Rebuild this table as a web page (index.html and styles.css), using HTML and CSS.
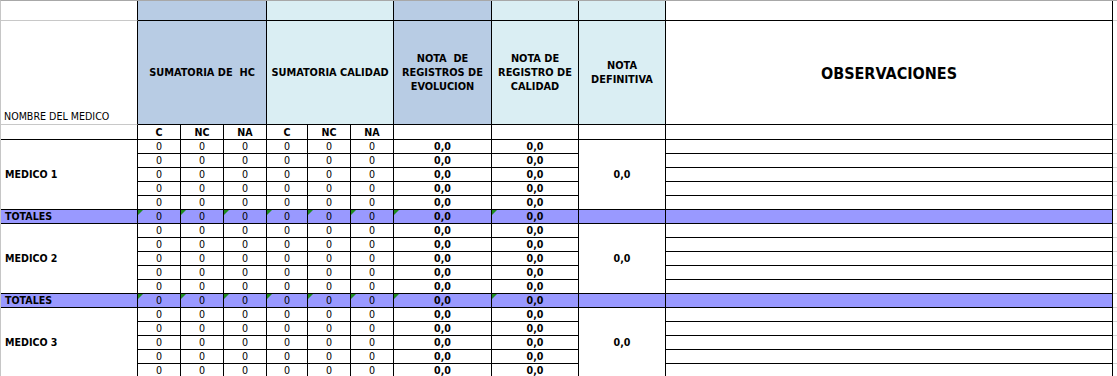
FILE: index.html
```html
<!DOCTYPE html>
<html lang="es">
<head>
<meta charset="utf-8">
<title>Evaluación de historias clínicas</title>
<link rel="stylesheet" href="styles.css">
</head>
<body>
<div class="sheet">
  <!-- header row 1 -->
  <div class="c gb"></div>
  <div class="c hb s3"></div>
  <div class="c hc s3"></div>
  <div class="c hb"></div>
  <div class="c hc"></div>
  <div class="c hc"></div>
  <div class="c"></div>
  <div class="g"></div>
  <!-- header row 2 -->
  <div class="c gb name">NOMBRE DEL MEDICO</div>
  <div class="c hb s3 hd">SUMATORIA DE&nbsp; HC</div>
  <div class="c hc s3 hd">SUMATORIA CALIDAD</div>
  <div class="c hb hd">NOTA&nbsp; DE<br>REGISTROS DE<br>EVOLUCION</div>
  <div class="c hc hd">NOTA DE<br>REGISTRO DE<br>CALIDAD</div>
  <div class="c hc hd">NOTA<br>DEFINITIVA</div>
  <div class="c obs">OBSERVACIONES</div>
  <div class="g"></div>
  <!-- header row 3 -->
  <div class="c"></div>
  <div class="c b">C</div><div class="c b">NC</div><div class="c b">NA</div>
  <div class="c b">C</div><div class="c b">NC</div><div class="c b">NA</div>
  <div class="c"></div><div class="c"></div><div class="c"></div><div class="c"></div>
  <div class="g"></div>

  <!-- MEDICO 1 -->
  <div class="c med">MEDICO 1</div>
  <div class="c n">0</div><div class="c n">0</div><div class="c n">0</div><div class="c n">0</div><div class="c n">0</div><div class="c n">0</div><div class="c b">0,0</div><div class="c b">0,0</div>
  <div class="c def">0,0</div>
  <div class="c"></div><div class="g"></div>
  <div class="c n">0</div><div class="c n">0</div><div class="c n">0</div><div class="c n">0</div><div class="c n">0</div><div class="c n">0</div><div class="c b">0,0</div><div class="c b">0,0</div><div class="c"></div><div class="g"></div>
  <div class="c n">0</div><div class="c n">0</div><div class="c n">0</div><div class="c n">0</div><div class="c n">0</div><div class="c n">0</div><div class="c b">0,0</div><div class="c b">0,0</div><div class="c"></div><div class="g"></div>
  <div class="c n">0</div><div class="c n">0</div><div class="c n">0</div><div class="c n">0</div><div class="c n">0</div><div class="c n">0</div><div class="c b">0,0</div><div class="c b">0,0</div><div class="c"></div><div class="g"></div>
  <div class="c n">0</div><div class="c n">0</div><div class="c n">0</div><div class="c n">0</div><div class="c n">0</div><div class="c n">0</div><div class="c b">0,0</div><div class="c b">0,0</div><div class="c"></div><div class="g"></div>
  <div class="c tot lbl">TOTALES</div>
  <div class="c tot n tri">0</div><div class="c tot n tri">0</div><div class="c tot n tri">0</div><div class="c tot n tri">0</div><div class="c tot n tri">0</div><div class="c tot n tri">0</div><div class="c tot b tri">0,0</div><div class="c tot b tri">0,0</div><div class="c tot"></div><div class="c tot"></div><div class="g"></div>

  <!-- MEDICO 2 -->
  <div class="c med">MEDICO 2</div>
  <div class="c n">0</div><div class="c n">0</div><div class="c n">0</div><div class="c n">0</div><div class="c n">0</div><div class="c n">0</div><div class="c b">0,0</div><div class="c b">0,0</div>
  <div class="c def">0,0</div>
  <div class="c"></div><div class="g"></div>
  <div class="c n">0</div><div class="c n">0</div><div class="c n">0</div><div class="c n">0</div><div class="c n">0</div><div class="c n">0</div><div class="c b">0,0</div><div class="c b">0,0</div><div class="c"></div><div class="g"></div>
  <div class="c n">0</div><div class="c n">0</div><div class="c n">0</div><div class="c n">0</div><div class="c n">0</div><div class="c n">0</div><div class="c b">0,0</div><div class="c b">0,0</div><div class="c"></div><div class="g"></div>
  <div class="c n">0</div><div class="c n">0</div><div class="c n">0</div><div class="c n">0</div><div class="c n">0</div><div class="c n">0</div><div class="c b">0,0</div><div class="c b">0,0</div><div class="c"></div><div class="g"></div>
  <div class="c n">0</div><div class="c n">0</div><div class="c n">0</div><div class="c n">0</div><div class="c n">0</div><div class="c n">0</div><div class="c b">0,0</div><div class="c b">0,0</div><div class="c"></div><div class="g"></div>
  <div class="c tot lbl">TOTALES</div>
  <div class="c tot n tri">0</div><div class="c tot n tri">0</div><div class="c tot n tri">0</div><div class="c tot n tri">0</div><div class="c tot n tri">0</div><div class="c tot n tri">0</div><div class="c tot b tri">0,0</div><div class="c tot b tri">0,0</div><div class="c tot"></div><div class="c tot"></div><div class="g"></div>

  <!-- MEDICO 3 -->
  <div class="c med">MEDICO 3</div>
  <div class="c n">0</div><div class="c n">0</div><div class="c n">0</div><div class="c n">0</div><div class="c n">0</div><div class="c n">0</div><div class="c b">0,0</div><div class="c b">0,0</div>
  <div class="c def">0,0</div>
  <div class="c"></div><div class="g"></div>
  <div class="c n">0</div><div class="c n">0</div><div class="c n">0</div><div class="c n">0</div><div class="c n">0</div><div class="c n">0</div><div class="c b">0,0</div><div class="c b">0,0</div><div class="c"></div><div class="g"></div>
  <div class="c n">0</div><div class="c n">0</div><div class="c n">0</div><div class="c n">0</div><div class="c n">0</div><div class="c n">0</div><div class="c b">0,0</div><div class="c b">0,0</div><div class="c"></div><div class="g"></div>
  <div class="c n">0</div><div class="c n">0</div><div class="c n">0</div><div class="c n">0</div><div class="c n">0</div><div class="c n">0</div><div class="c b">0,0</div><div class="c b">0,0</div><div class="c"></div><div class="g"></div>
  <div class="c n">0</div><div class="c n">0</div><div class="c n">0</div><div class="c n">0</div><div class="c n">0</div><div class="c n">0</div><div class="c b">0,0</div><div class="c b">0,0</div><div class="c"></div><div class="g"></div>
</div>
</body>
</html>
```
FILE: styles.css
```css
html, body {
  margin: 0;
  padding: 0;
  background: #fff;
  overflow: hidden;
}

.sheet {
  display: grid;
  grid-template-columns: 137px 43px 43px 43px 41px 43px 43px 98px 87px 87px 447px 4px;
  grid-template-rows: 20px 104px 15px;
  grid-auto-rows: 14px;
  border-left: 1px solid #c6c6c6;
  border-top: 1px solid #a8a8a8;
  width: max-content;
  font-family: "DejaVu Sans Condensed", "DejaVu Sans", sans-serif;
  font-stretch: semi-condensed;
  font-size: 10.6px;
  color: #000;
}

.c {
  box-sizing: border-box;
  border-right: 1px solid #000;
  border-bottom: 1px solid #000;
  position: relative;
  display: flex;
  align-items: center;
  justify-content: center;
  line-height: 13px;
  white-space: nowrap;
  overflow: hidden;
}

.g {
  box-sizing: border-box;
  border-bottom: 1px solid #d4d4d4;
}

.gb {
  border-bottom-color: #c8c8c8;
}

.s3 {
  grid-column: span 3;
}

.hb {
  background: #b8cce4;
}

.hc {
  background: #daeef3;
}

.hd {
  font-weight: bold;
  font-size: 10.9px;
  line-height: 14px;
  text-align: center;
}

.name {
  justify-content: flex-start;
  align-items: flex-end;
  padding: 0 0 1px 3px;
}

.obs {
  font-weight: bold;
  font-size: 16px;
  padding-top: 1px;
}

.b {
  font-weight: bold;
}

.n {
  font-weight: normal;
}

.med {
  grid-row: span 5;
  justify-content: flex-start;
  padding-left: 4px;
  font-weight: bold;
}

.def {
  grid-row: span 5;
  font-weight: bold;
}

.tot {
  background: #9999ff;
}

.lbl {
  justify-content: flex-start;
  padding-left: 4px;
  font-weight: bold;
}

.tri::before {
  content: "";
  position: absolute;
  left: 0;
  top: 0;
  border-top: 5px solid #1e8c1e;
  border-right: 5px solid transparent;
}
```
